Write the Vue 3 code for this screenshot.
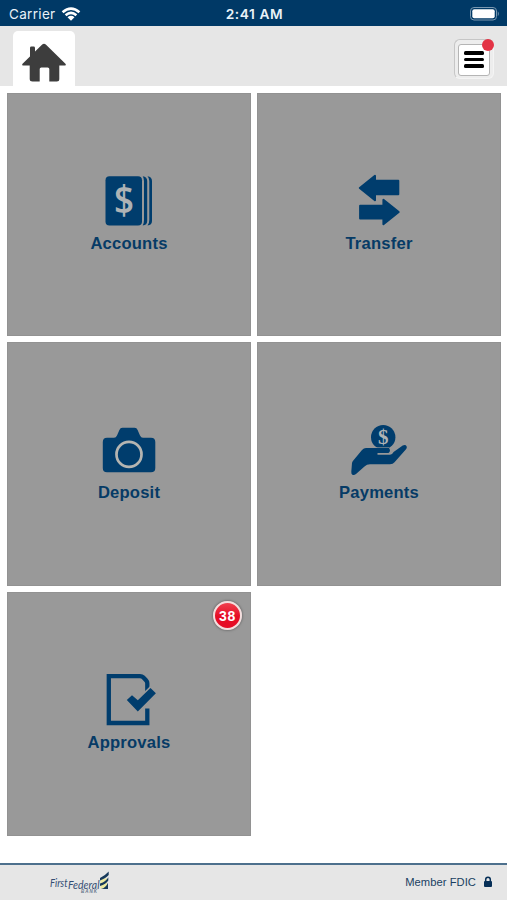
<script setup>
const tiles = [
  { id: 'accounts', label: 'Accounts' },
  { id: 'transfer', label: 'Transfer' },
  { id: 'deposit', label: 'Deposit' },
  { id: 'payments', label: 'Payments' },
  { id: 'approvals', label: 'Approvals', badge: 38 },
]
</script>

<template>
  <div class="screen">
    <div class="status">
      <div class="carrier">
        <span>Carrier</span>
        <svg class="wifi" viewBox="0 0 20 16">
          <path d="M1.6 6.3Q10 -1.2 18.4 6.3M4.6 9.2Q10 4.6 15.4 9.2" />
          <path class="dot" d="M6.5 11.2Q10 8.4 13.5 11.2L10 14.8Z" />
        </svg>
      </div>
      <span class="time">2:41 AM</span>
      <div class="power">
        <svg class="battery" viewBox="0 0 31 16">
          <rect class="shell" x="1.5" y="1.5" width="26" height="12.5" rx="3.5" />
          <rect class="charge" x="3.3" y="3.3" width="22.4" height="9" rx="2" />
          <path class="cap" d="M28.8 5.3Q30.8 7.7 28.8 10.2Z" />
        </svg>
      </div>
    </div>

    <header class="bar">
      <div class="home">
        <svg viewBox="0 0 46 40">
          <path d="M1.3 22 21.2 2.5Q23 1.2 24.8 2.5L44.7 22Q45.4 23.6 43.8 23.6H38.3V37Q38.3 39.5 35.8 39.5H28.3V27Q28.3 25.4 26.7 25.4H20.3Q18.7 25.4 18.7 27V39.5H11.5Q8.7 39.5 8.7 37V23.6H2.2Q.6 23.6 1.3 22ZM9 15V6Q9 4.6 10.4 4.6H12.6Q14 4.6 14 6V11Z" />
        </svg>
      </div>
      <button class="menu" aria-label="Menu">
        <span class="lines"><i></i><i></i><i></i></span>
        <b class="alert"></b>
      </button>
    </header>

    <main class="tiles">
      <section v-for="t in tiles" :key="t.id" class="tile">
        <svg class="icon" viewBox="19 7 60 56">
          <g v-if="t.id === 'accounts'">
            <rect x="25.5" y="11.2" width="36.5" height="49.3" rx="4" />
            <path d="M67.5 11.2Q72 12 72 16V56Q72 60 67.5 60.5Q69.3 58.5 69.3 55V16Q69.3 13 67.5 11.2Z" />
            <path d="M62.7 11.2Q67.2 12 67.2 16V56Q67.2 60 62.7 60.5Q64 58.5 64 55V16Q64 13 62.7 11.2Z" />
            <text class="dollar large" x="44" y="49" textLength="20" lengthAdjust="spacingAndGlyphs">$</text>
          </g>
          <g v-else-if="t.id === 'transfer'">
            <path class="rounded" d="M29.8 23 45 10.8V15.8H68.3V29.3H45V35.2ZM68.7 47 53.4 34.8V40.7H30.1V53.6H53.4V59.2Z" />
          </g>
          <g v-else-if="t.id === 'deposit'">
            <path d="M27 22.7H34Q36 22.7 37 20.5L39.4 15Q40.2 12.8 42.4 12.8H54.6Q56.8 12.8 57.6 15L60 20.5Q61 22.7 63 22.7H71Q75.3 22.7 75.3 27V53Q75.3 57.3 71 57.3H27Q22.8 57.3 22.8 53V27Q22.8 22.7 27 22.7Z" />
            <circle class="lens" cx="49" cy="39.4" r="12.5" />
          </g>
          <g v-else-if="t.id === 'payments'">
            <circle cx="53.2" cy="22.2" r="12.2" />
            <text class="dollar small" x="53.3" y="29">$</text>
            <path class="cuff" d="M36 32.9H59Q61.2 35.8 58.5 38H47.5V39.7H60Q62.3 39.5 63.6 37L72.7 30.6Q75.6 29.3 76.7 31.5Q77.3 33 75.8 34.5L64.5 47.3Q63 49.3 60 49.3H40Q36.8 49.3 34.5 51.5L26 59Q24 60.5 22.4 59.7Q21.2 59 21.3 56.7L22 48Q22.2 46.5 23.3 45.4L32 35Q33.8 32.9 36 32.9Z" />
          </g>
          <g v-else>
            <path class="outline" d="M67.3 27V18.2Q67.3 16.7 66 15.3L63.2 12.3Q62 11.1 60 11.1H28.8V58H67.3V43.4" />
            <path class="gap" d="M46.8 35.1 52 30.3 57.8 35.3 70.5 22.9 75.9 28.3 57.8 46.4Z" />
            <path d="M46.8 35.1 52 30.3 57.8 35.3 70.5 22.9 75.9 28.3 57.8 46.4Z" />
          </g>
        </svg>
        <span class="label">{{ t.label }}</span>
        <span v-if="t.badge" class="badge">{{ t.badge }}</span>
      </section>
    </main>

    <footer class="foot">
      <svg class="logo" viewBox="0 0 64 26">
        <text class="brand" x="1" y="16.8" textLength="17.5" lengthAdjust="spacingAndGlyphs">First</text>
        <text class="brand" x="19" y="19" textLength="31.5" lengthAdjust="spacingAndGlyphs">Federal</text>
        <text class="bank" x="32" y="23.2" textLength="16">BANK</text>
        <path class="sun" d="M51.5 8.5H58V18.5H51.5Z" />
        <path class="sail" d="M51 8Q56 5.7 59.7 1.5V5Q57 8.2 51 10.4ZM51 13.5Q57 11.7 59.3 7.2V10.4Q57 14.3 51 16ZM52 19.1Q57 17.7 59 12.8V19.1Z" />
      </svg>
      <div class="member">
        <span>Member FDIC</span>
        <svg viewBox="0 0 10 12">
          <path class="shackle" d="M2.7 5.5V3.6Q2.7 1.3 5 1.3Q7.3 1.3 7.3 3.6V5.5" />
          <rect x="1" y="5" width="8" height="6" rx="1" />
        </svg>
      </div>
    </footer>
  </div>
</template>

<style>
body {
  margin: 0;
  background: #fff;
}
</style>

<style scoped>
.screen {
  width: 507px;
  height: 900px;
  display: flex;
  flex-direction: column;
  overflow: hidden;
  background: #fff;
  font-family: "Liberation Sans", Arial, sans-serif;
}
.status {
  box-sizing: border-box;
  height: 25.5px;
  flex: none;
  display: grid;
  grid-template-columns: 1fr auto 1fr;
  align-items: center;
  padding: 2px 7px 0 9px;
  background: #003966;
  color: #e9f2f8;
  font-family: Inter, sans-serif;
  font-size: 13.5px;
}
.carrier {
  display: flex;
  align-items: center;
  gap: 5px;
  letter-spacing: 0.32px;
}
.wifi {
  width: 20px;
  height: 16px;
  fill: none;
  stroke: #fff;
  stroke-width: 2.6;
}
.wifi .dot {
  fill: #fff;
  stroke: none;
}
.time {
  font-size: 13.7px;
  font-weight: 600;
  letter-spacing: 0.6px;
}
.power {
  display: flex;
  justify-content: flex-end;
}
.battery {
  width: 31px;
  height: 16px;
}
.shell {
  fill: none;
  stroke: #7a98b0;
}
.charge {
  fill: #fff;
}
.cap {
  fill: #7a98b0;
}
.bar {
  box-sizing: border-box;
  height: 60.5px;
  flex: none;
  display: flex;
  justify-content: space-between;
  align-items: flex-start;
  padding: 5.5px 13.5px 0 13px;
  background: #e6e6e6;
}
.home {
  box-sizing: border-box;
  width: 61.5px;
  height: 55px;
  padding: 11px 0 0 8px;
  border-radius: 5px 5px 0 0;
  background: #fff;
}
.home svg {
  display: block;
  width: 46px;
  height: 40px;
  fill: #3d3d3d;
}
.menu {
  position: relative;
  box-sizing: border-box;
  width: 40px;
  height: 40px;
  margin-top: 7.5px;
  padding: 4px 3px 3px;
  border: 1px solid;
  border-color: #c6c6c6 #f4f4f4 #f4f4f4 #c6c6c6;
  border-radius: 6px;
  background: #ededed;
}
.lines {
  box-sizing: border-box;
  display: flex;
  flex-direction: column;
  align-items: center;
  justify-content: center;
  gap: 2.8px;
  width: 32px;
  height: 32px;
  border: 1px solid #b5b5b5;
  border-radius: 3px;
  background: #fff;
}
.lines i {
  width: 20px;
  height: 3.6px;
  border-radius: 1.5px;
  background: #000;
}
.alert {
  position: absolute;
  top: -1px;
  right: -1px;
  width: 12px;
  height: 12px;
  border-radius: 50%;
  background: #e33345;
}
.tiles {
  flex: 1;
  display: grid;
  grid-template-columns: 244px 244px;
  grid-auto-rows: 243.5px;
  gap: 6.2px 6px;
  align-content: start;
  padding: 6.8px 0 0 7px;
}
.tile {
  position: relative;
  box-sizing: border-box;
  display: flex;
  flex-direction: column;
  align-items: center;
  padding-top: 79.4px;
  background: #999;
  box-shadow: inset 0 0 0 1px #929292;
}
.icon {
  width: 60px;
  height: 56px;
  fill: #003d6d;
}
.rounded {
  stroke: #003d6d;
  stroke-width: 2;
  stroke-linejoin: round;
}
.lens {
  fill: none;
  stroke: #b5b5b1;
  stroke-width: 2.7;
}
.outline {
  fill: none;
  stroke: #003d6d;
  stroke-width: 4.3;
}
.gap {
  fill: #999;
  stroke: #999;
  stroke-width: 3;
}
.cuff {
  stroke: #999;
  stroke-width: 1;
  paint-order: stroke;
}
.dollar {
  fill: #aeb3b5;
  text-anchor: middle;
  font-family: "Open Sans", sans-serif;
  font-weight: 600;
}
.large {
  font-size: 39px;
}
.small {
  font-family: "Liberation Serif", serif;
  font-weight: 700;
  font-size: 21px;
}
.label {
  margin-top: 5.4px;
  color: #063b66;
  font-size: 16.6px;
  font-weight: 700;
  line-height: 19px;
  letter-spacing: 0.2px;
}
.badge {
  position: absolute;
  top: 9px;
  right: 9.5px;
  box-sizing: border-box;
  width: 29px;
  height: 29px;
  border: 2px solid #f3dede;
  border-radius: 50%;
  background: linear-gradient(#f0404e, #e50c25 55%);
  box-shadow: 0 0 2px 1px #777;
  color: #fff;
  font-size: 14px;
  font-weight: 700;
  line-height: 26px;
  letter-spacing: 0.8px;
  text-indent: 1px;
  text-align: center;
}
.foot {
  box-sizing: border-box;
  height: 37px;
  flex: none;
  display: flex;
  justify-content: space-between;
  align-items: flex-start;
  padding: 5px 14px 0 49px;
  border-top: 2px solid #4d708d;
  background: #e6e6e6;
}
.logo {
  width: 64px;
  height: 26px;
}
.brand {
  fill: #344d73;
  font-size: 11px;
  font-style: italic;
  font-family: Lato, sans-serif;
}
.bank {
  fill: #66778d;
  font-size: 4.5px;
  font-style: italic;
  font-weight: 700;
}
.sun {
  fill: #eeeaa0;
}
.sail {
  fill: #173a5b;
}
.member {
  display: flex;
  align-items: center;
  gap: 7px;
  padding-top: 6px;
  color: #193f62;
  font-size: 11.2px;
  letter-spacing: 0.05px;
}
.member svg {
  width: 10px;
  height: 12px;
  fill: #062f57;
}
.member .shackle {
  fill: none;
  stroke: #062f57;
  stroke-width: 1.5;
}
</style>
